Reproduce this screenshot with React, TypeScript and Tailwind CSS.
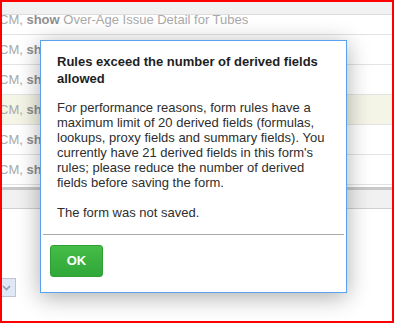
const rows = [
  { beige: false },
  { beige: false },
  { beige: true },
  { beige: false },
  { beige: false },
];

function RowText() {
  return (
    <span className="-ml-[3px] whitespace-nowrap text-[13px] text-[#a9a9a9]">
      CM, <b className="font-bold text-[#8f8f8f]">show</b> Over-Age Issue Detail for Tubes
    </span>
  );
}

const bodyLines = [
  "For performance reasons, form rules have a",
  "maximum limit of 20 derived fields (formulas,",
  "lookups, proxy fields and summary fields). You",
  "currently have 21 derived fields in this form's",
  "rules; please reduce the number of derived",
  "fields before saving the form.",
];

export default function App() {
  return (
    <div className="relative h-[323px] w-[394px] overflow-hidden border-2 border-[#ff0000] bg-white font-['Liberation_Sans',Arial,sans-serif]">
      {/* list behind the modal */}
      <div className="h-[13px] border-b border-[#dcdcdc] bg-[#f1f1f1]" />
      <div className="h-[20px] overflow-hidden border-b border-[#e3e3e3]">
        <div className="-mt-[10px] flex h-[30px] items-center">
          <RowText />
        </div>
      </div>
      {rows.map((r, i) => (
        <div
          key={i}
          className={
            r.beige
              ? "flex h-[30px] items-center border-b border-[#e3e3e3] bg-[#f4f4e7]"
              : "flex h-[30px] items-center border-b border-[#e3e3e3]"
          }
        >
          <RowText />
        </div>
      ))}
      <div className="h-[2px]" />
      <div className="h-[22px] border-t-[3px] border-b border-t-[#c9c9c9] border-b-[#d0d0d0] bg-[#f1f1f1]" />

      <div className="mt-[69px] -ml-[12px] flex h-[19px] w-[26px] items-center justify-end border border-[#c2c2d0] bg-[#dfe8f7] pr-[4px]">
        <svg width="9" height="6" viewBox="0 0 9 6" fill="none">
          <path d="M1 1l3.5 3.5L8 1" stroke="#9a9aa6" strokeWidth="1.6" />
        </svg>
      </div>

      {/* modal */}
      <div className="absolute left-[38px] top-[38px] flex h-[253px] w-[307px] flex-col border border-[#5aa1ee] bg-white shadow-[0_4px_22px_rgba(0,0,0,0.33)]">
        <div className="px-[16px] pt-[12px]">
          <h2 className="text-[13px] font-bold leading-[17px] text-[#1e1e1e]">
            <span className="block whitespace-nowrap">Rules exceed the number of derived fields</span>
            <span className="block whitespace-nowrap">allowed</span>
          </h2>
          <p className="mt-[13px] text-[13px] leading-[15px] text-[#2e2e2e]">
            {bodyLines.map((l) => (
              <span key={l} className="block whitespace-nowrap">
                {l}
              </span>
            ))}
          </p>
          <p className="mt-[15px] text-[13px] leading-[15px] text-[#2e2e2e]">The form was not saved.</p>
        </div>
        <div className="mx-[2px] mt-[14px] h-px bg-[#a9a9a9]" />
        <div className="pl-[9px] pt-[10px]">
          <button className="flex h-[32px] w-[53px] items-center justify-center rounded-[3px] border border-[#2f9f34] bg-gradient-to-b from-[#46bd45] to-[#2fa73a] text-[13px] font-bold text-white">
            OK
          </button>
        </div>
      </div>
    </div>
  );
}
